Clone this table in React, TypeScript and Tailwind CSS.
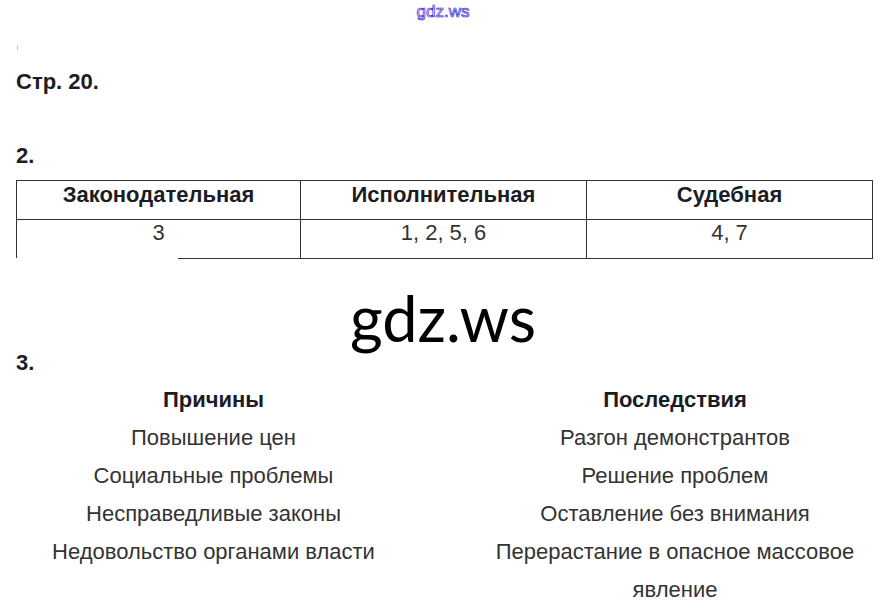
const rows = {
  causes: ["Повышение цен", "Социальные проблемы", "Несправедливые законы", "Недовольство органами власти"],
  effects: ["Разгон демонстрантов", "Решение проблем", "Оставление без внимания", "Перерастание в опасное массовое явление"],
};

const heads = ["Законодательная", "Исполнительная", "Судебная"];
const vals = ["3", "1, 2, 5, 6", "4, 7"];

export default function App() {
  return (
    <div className="relative w-[886px] h-[616px] overflow-hidden bg-white font-['Liberation_Sans',Arial,sans-serif] text-[22px] text-[#333]">
      {/* small watermark */}
      <div className="flex justify-center h-[24px] pt-[1px]">
        <span className="text-[17px] leading-[22px] text-[#eef] [-webkit-text-stroke:0.7px_#2a2ad4]">gdz.ws</span>
      </div>

      <div className="px-[16px]">
        <div className="mt-[21px] ml-[1px] w-px h-[5px] bg-[#c8c8c8]" />

        <h2 className="mt-[20px] font-bold leading-[24px] text-[#1c1c24]">Стр. 20.</h2>

        <h3 className="mt-[50px] font-bold leading-[24px] text-[#1c1c24]">2.</h3>

        <div className="mt-[12px] w-[857px]">
          <div className="grid grid-cols-[285px_286px_286px] border-t border-[#333]">
            {heads.map((h, i) => (
              <div
                key={h}
                className={"h-[39px] pt-[2px] text-center font-bold leading-[24px] text-[#1c1c24] border-b border-r border-[#333] " + (i === 0 ? "border-l" : "")}
              >
                {h}
              </div>
            ))}
            {vals.map((v, i) => (
              <div
                key={v}
                className={"h-[38px] pt-[1px] text-center leading-[24px] border-r border-[#333] " + (i === 0 ? "border-l" : "")}
              >
                {v}
              </div>
            ))}
          </div>
          <div className="ml-[162px] h-px bg-[#333]" />
        </div>

        <h3 className="mt-[92px] font-bold leading-[24px] text-[#1c1c24]">3.</h3>

        <div className="mt-[6px] flex items-start">
          <div className="w-[395px] shrink-0 text-center leading-[38px]">
            <div className="font-bold text-[#1c1c24]">Причины</div>
            {rows.causes.map((t) => (
              <div key={t}>{t}</div>
            ))}
          </div>
          <div className="ml-[54px] w-[420px] shrink-0 text-center leading-[38px]">
            <div className="font-bold text-[#1c1c24]">Последствия</div>
            {rows.effects.map((t) => (
              <div key={t}>{t}</div>
            ))}
          </div>
        </div>
      </div>

      {/* big watermark over the page */}
      <div className="absolute left-0 right-0 top-[286px] flex justify-center">
        <span className="font-['Lato',sans-serif] text-[63px] leading-[63px] text-black">gdz.ws</span>
      </div>
    </div>
  );
}
